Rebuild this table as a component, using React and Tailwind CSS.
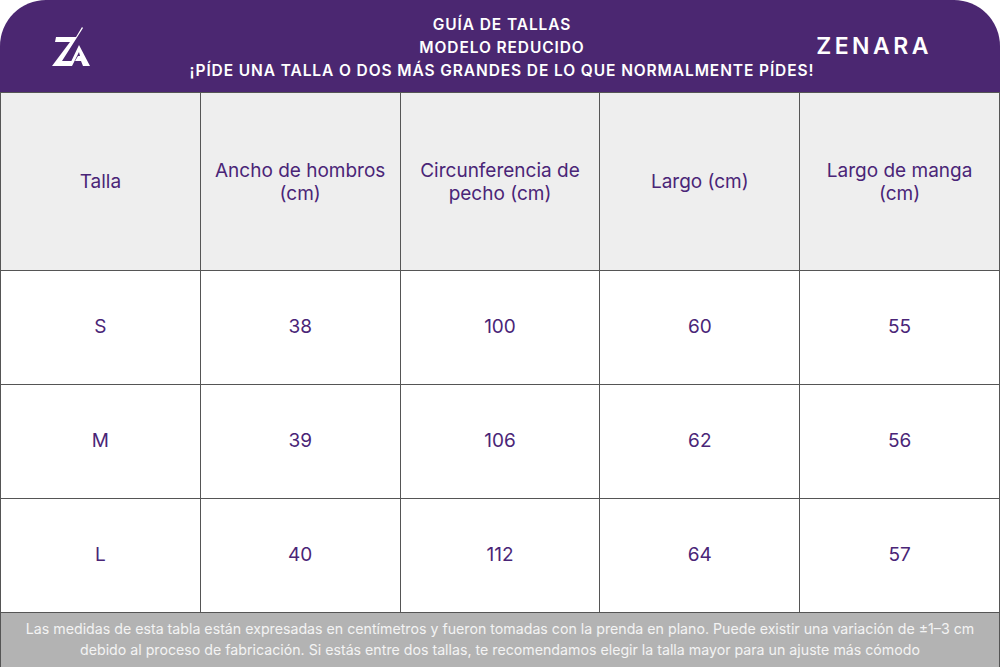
const headers = [
  'Talla',
  'Ancho de hombros (cm)',
  'Circunferencia de pecho (cm)',
  'Largo (cm)',
  'Largo de manga (cm)',
];

const rows = [
  ['S', '38', '100', '60', '55'],
  ['M', '39', '106', '62', '56'],
  ['L', '40', '112', '64', '57'],
];

function Logo() {
  return (
    <svg width="40" height="44" viewBox="0 0 40 44" fill="#fff">
      {/* Z */}
      <polygon points="4,12 24,12 30,2 31,3 10,36 22,36 19,41 0,41 18,17 3,17" />
      {/* A */}
      <polygon points="27,20 38,41 31,41 29,36 23,36 26,31 28,31 27,27 20,41 17,41" />
    </svg>
  );
}

export default function App() {
  return (
    <div className="w-[1000px] h-[667px] bg-white flex flex-col" style={{ fontFamily: 'Inter, "Open Sans", sans-serif' }}>
      <div className="h-[92px] bg-[#4b2771] rounded-t-[46px] flex items-center pl-[52px] pr-[72px]">
        <div className="w-[120px] pt-[2px]">
          <Logo />
        </div>
        <div className="flex-1 flex flex-col items-center text-white font-semibold text-[15.5px] leading-[23px] tracking-[0.9px] pt-[2px]">
          <div>GUÍA DE TALLAS</div>
          <div>MODELO REDUCIDO</div>
          <div>¡PÍDE UNA TALLA O DOS MÁS GRANDES DE LO QUE NORMALMENTE PÍDES!</div>
        </div>
        <div className="w-[100px] flex justify-end text-white text-[23px] font-semibold tracking-[3.5px] mr-[-4px] pt-[1px]">
          ZENARA
        </div>
      </div>

      <div className="grid grid-cols-5 border-l border-t border-[#555]">
        {headers.map((h) => (
          <div
            key={h}
            className="h-[178px] bg-[#eeeeee] border-r border-b border-[#555] flex items-center justify-center text-center px-[12px] text-[19px] leading-[23px] text-[#4a2577]"
          >
            {h}
          </div>
        ))}
        {rows.map((r) =>
          r.map((c, i) => (
            <div
              key={r[0] + i}
              className="h-[114px] border-r border-b border-[#555] flex items-center justify-center text-[19px] text-[#4a2577]"
            >
              {c}
            </div>
          ))
        )}
      </div>

      <div className="flex-1 bg-[#b3b3b3] border-l border-r border-[#555] flex flex-col items-center justify-center text-[#f4f4f4] text-[14.2px] leading-[21px] pb-[2px]">
        <div>Las medidas de esta tabla están expresadas en centímetros y fueron tomadas con la prenda en plano. Puede existir una variación de ±1–3 cm</div>
        <div>debido al proceso de fabricación. Si estás entre dos tallas, te recomendamos elegir la talla mayor para un ajuste más cómodo</div>
      </div>
    </div>
  );
}
